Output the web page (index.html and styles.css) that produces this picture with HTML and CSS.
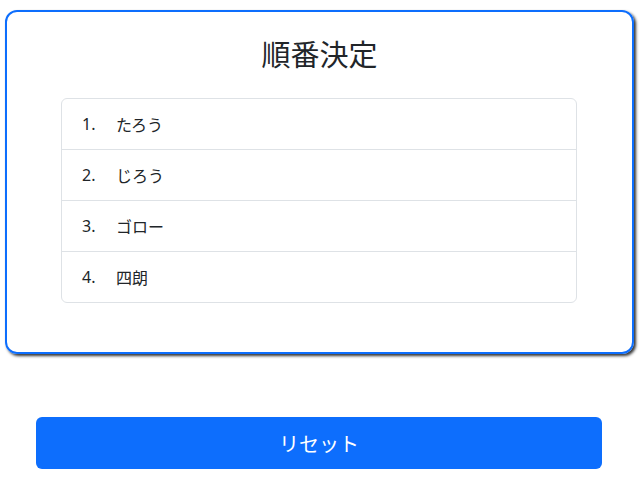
FILE: index.html
```html
<!DOCTYPE html>
<html lang="ja">
<head>
  <meta charset="utf-8">
  <title>順番決定</title>
  <link rel="stylesheet" href="styles.css">
</head>
<body>
  <div class="card">
    <h1>順番決定</h1>
    <ol class="order">
      <li><span class="num">1.</span>たろう</li>
      <li><span class="num">2.</span>じろう</li>
      <li><span class="num">3.</span>ゴロー</li>
      <li><span class="num">4.</span>四朗</li>
    </ol>
  </div>
  <button class="reset">リセット</button>
</body>
</html>
```

FILE: styles.css
```css
body {
  margin: 0;
  font-family: "Noto Sans", "Noto Sans CJK JP", sans-serif;
  color: #212529;
  background: #fff;
}

.card {
  margin: 10px 6px 0 5px;
  padding: 26px 0 49px;
  border: 2px solid #0d6efd;
  border-radius: 12px;
  box-shadow: 2px 2px 3px #333;
}

.card h1 {
  margin: 0 0 26px;
  font-size: 29px;
  font-weight: 400;
  line-height: 34px;
  text-align: center;
}

.order {
  list-style: none;
  margin: 0 55px 0 54px;
  padding: 0;
  border: 1px solid #dee2e6;
  border-radius: 6px;
}

.order li {
  display: flex;
  align-items: center;
  height: 50px;
  padding: 0 20px;
  font-size: 16px;
}

.order li + li {
  border-top: 1px solid #dee2e6;
}

.order .num {
  width: 34px;
}

.reset {
  display: block;
  margin: 63px 0 0 36px;
  width: 566px;
  height: 52px;
  border: 0;
  border-radius: 6px;
  background: #0d6efd;
  color: #fff;
  font-family: "Noto Sans", "Noto Sans CJK JP", sans-serif;
  font-size: 20px;
}
```
